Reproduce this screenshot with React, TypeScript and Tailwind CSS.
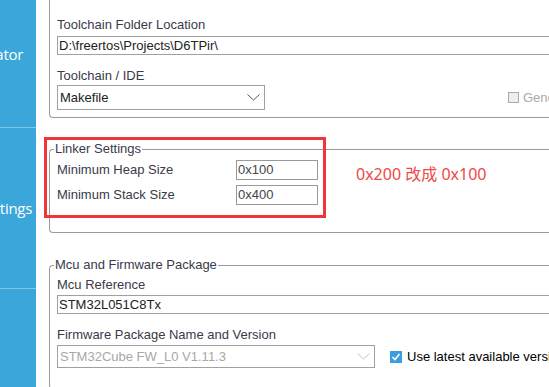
import React from "react";

const FONT = { fontFamily: '"Liberation Sans", Arial, sans-serif' };

function Chevron({ color }: { color: string }) {
	return (
		<svg width="13" height="7" viewBox="0 0 13 7" fill="none">
			<polyline points="0.5,0.5 6.5,6 12.5,0.5" stroke={color} strokeWidth="1" />
		</svg>
	);
}

function SideTab({ text, height, pr, extra = "" }: { text: string; height: string; pr: string; extra?: string }) {
	return (
		<div className={`flex items-center justify-end overflow-hidden whitespace-nowrap border-b border-[#7ec6ea] ${height} ${pr} ${extra}`}>
			<span className="shrink-0 text-[15px] tracking-[-0.3px] text-white" style={{ fontFamily: '"Open Sans", sans-serif' }}>
				{text}
			</span>
		</div>
	);
}

export default function App() {
	return (
		<div className="relative flex h-[387px] w-[549px] overflow-hidden bg-white" style={FONT}>
			{/* left tab strip */}
			<div className="flex w-[36px] shrink-0 flex-col bg-[#3ba6da]">
				<SideTab text="Code Generator" height="h-[147px]" pr="pr-[13px]" extra="-mt-[19px]" />
				<SideTab text="Advanced Settings" height="h-[161px]" pr="pr-[4px]" />
			</div>

			<div className="flex min-w-0 flex-1 flex-col pl-[13px] text-[13px] leading-4 text-[#3a3a4a]">
				{/* toolchain box (top edge scrolled away) */}
				<div className="w-[560px] shrink-0 rounded-bl-[4px] border-b border-l border-[#9a9a9a] pb-[7px] pl-[7px] pt-[17px]">
					<div>Toolchain Folder Location</div>
					<div className="mt-[3px] flex h-[19px] items-center border border-[#a0a0a0] pl-[1px] text-[#222]">
						D:\freertos\Projects\D6TPir\
					</div>
					<div className="mt-[13px]">Toolchain / IDE</div>
					<div className="mt-[1px] flex items-center whitespace-nowrap">
						<div className="flex h-[25px] w-[208px] shrink-0 items-center justify-between border border-[#a0a0a0] pl-[2px] pr-[4px] text-[#222]">
							<span>Makefile</span>
							<Chevron color="#555" />
						</div>
						<div className="ml-[243px] flex shrink-0 items-center gap-[4px] text-[#aaa]">
							<span className="h-[11px] w-[11px] border border-[#aaa] bg-[#eee]" />
							<span>Generate Under Root</span>
						</div>
					</div>
				</div>

				{/* linker settings */}
				<fieldset className="mt-[23px] w-[560px] shrink-0 rounded-l-[4px] border border-r-0 border-[#9a9a9a] pb-[27px] pl-[7px] pt-[3px]">
					<legend className="-ml-[3px] px-[1px]">Linker Settings</legend>
					<div className="flex items-start">
						<div className="flex flex-col gap-[5px]">
							<div className="flex items-center">
								<span className="w-[179px]">Minimum Heap Size</span>
								<div className="flex h-[20px] w-[82px] items-center border border-[#999] pl-[1px] text-[#444]">0x100</div>
							</div>
							<div className="flex items-center">
								<span className="w-[179px]">Minimum Stack Size</span>
								<div className="flex h-[20px] w-[82px] items-center border border-[#999] pl-[1px] text-[#444]">0x400</div>
							</div>
						</div>
						<span
							className="ml-[38px] mt-[2px] text-[16px] leading-6 text-[#f04848]"
							style={{ fontFamily: '"Noto Sans", "Noto Sans CJK SC", sans-serif' }}
						>
							0x200 改成 0x100
						</span>
					</div>
				</fieldset>

				{/* mcu and firmware */}
				<fieldset className="mt-[24px] w-[560px] shrink-0 rounded-l-[4px] border border-r-0 border-[#9a9a9a] pb-[20px] pl-[7px]">
					<legend className="-ml-[3px] px-[1px]">Mcu and Firmware Package</legend>
					<div className="mt-[4px]">Mcu Reference</div>
					<div className="mt-[2px] flex h-[19px] items-center border border-[#a0a0a0] pl-[1px] text-[#222]">
						STM32L051C8Tx
					</div>
					<div className="mt-[13px]">Firmware Package Name and Version</div>
					<div className="mt-[2px] flex items-center whitespace-nowrap">
						<div className="flex h-[23px] w-[318px] shrink-0 items-center justify-between border border-[#a0a0a0] pl-[2px] pr-[4px] text-[#a8a8a8]">
							<span>STM32Cube FW_L0 V1.11.3</span>
							<Chevron color="#c4c4c4" />
						</div>
						<div className="ml-[15px] flex shrink-0 items-center gap-[5px] text-black">
							<span className="flex h-[12px] w-[12px] items-center justify-center bg-[#3a9fe0]">
								<svg width="10" height="10" viewBox="0 0 10 10" fill="none">
									<polyline points="1.5,5 4,7.5 8.5,2" stroke="white" strokeWidth="1.6" />
								</svg>
							</span>
							<span>Use latest available version</span>
						</div>
					</div>
				</fieldset>
			</div>

			{/* red annotation frame */}
			<div className="pointer-events-none absolute left-[44px] top-[137px] h-[81px] w-[282px] border-[3px] border-[#f03538]" />
		</div>
	);
}
